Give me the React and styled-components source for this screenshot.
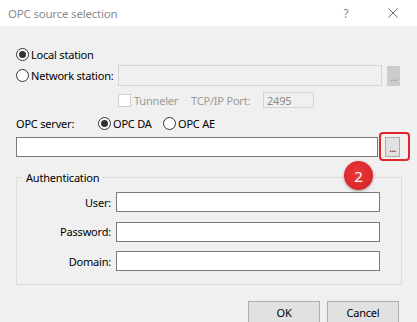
import React from 'react'
import styled, { createGlobalStyle } from 'styled-components'

const Global = createGlobalStyle`
  body {
    margin: 0;
    background: #f0f0f0;
    font-family: "Noto Sans", "Open Sans", sans-serif;
    font-size: 11px;
    letter-spacing: -0.2px;
    color: #000;
    white-space: nowrap;
  }
`

const Window = styled.div`
  position: relative;
  width: 417px;
  height: 322px;
  overflow: hidden;
  background: #f0f0f0;
  display: flex;
  flex-direction: column;
`

const TitleBar = styled.div`
  height: 26px;
  flex-shrink: 0;
  background: #fff;
  display: flex;
  align-items: center;
  padding-left: 8px;
  color: #8c8c8c;
  font-size: 11.5px;
`

const Title = styled.span`
  flex: 1;
`

const Help = styled.span`
  width: 12px;
  text-align: center;
  font-size: 12px;
  color: #8c8c8c;
  margin-right: 36px;
`

const Close = styled.svg`
  width: 10px;
  height: 10px;
  margin-right: 19px;
`

const Body = styled.div`
  display: flex;
  flex-direction: column;
  padding: 18px 15px 0 16px;
`

const Row = styled.div`
  display: flex;
  align-items: center;
  height: ${p => p.h || 20}px;
  margin-top: ${p => p.mt || 0}px;
  padding-left: ${p => p.pl || 0}px;
`

const RadioWrap = styled.label`
  display: flex;
  align-items: center;
  gap: 2px;
  width: ${p => (p.w ? p.w + 'px' : 'auto')};
  margin-left: ${p => p.ml || 0}px;
  flex-shrink: 0;
`

const Circle = styled.span`
  width: 13px;
  height: 13px;
  box-sizing: border-box;
  border: 1px solid #333;
  border-radius: 50%;
  background: #fff;
  display: flex;
  align-items: center;
  justify-content: center;
  flex-shrink: 0;
  &::after {
    content: '';
    width: 7px;
    height: 7px;
    border-radius: 50%;
    background: ${p => (p.checked ? '#333' : 'transparent')};
  }
`

const Radio = ({ checked, children, w, ml }) => (
  <RadioWrap w={w} ml={ml}>
    <Circle checked={checked} />
    <span>{children}</span>
  </RadioWrap>
)

const Field = styled.div`
  box-sizing: border-box;
  width: ${p => p.w}px;
  height: ${p => p.h || 20}px;
  border: 1px solid ${p => (p.disabled ? '#d4d4d4' : '#7a7a7a')};
  background: ${p => (p.disabled ? '#f0f0f0' : '#fff')};
  color: #8a8a8a;
  padding-left: 3px;
  display: flex;
  align-items: center;
  margin-left: ${p => p.ml || 0}px;
  flex-shrink: 0;
`

const DotsButton = styled.div`
  position: relative;
  box-sizing: border-box;
  width: ${p => p.w || 14}px;
  height: ${p => p.h || 20}px;
  margin-left: ${p => p.ml || 0}px;
  background: ${p => (p.disabled ? '#cccccc' : '#e1e1e1')};
  border: 1px solid ${p => (p.disabled ? '#cccccc' : '#adadad')};
  color: ${p => (p.disabled ? '#8f8f8f' : '#222')};
  display: flex;
  align-items: flex-end;
  justify-content: center;
  padding-bottom: 3px;
  font-size: 10px;
  line-height: 1;
  letter-spacing: -0.5px;
  flex-shrink: 0;
`

const Highlight = styled.div`
  position: absolute;
  left: -7px;
  top: -6px;
  right: -11px;
  bottom: -5px;
  border: 2px solid #e0262b;
  border-radius: 4px;
`

const Badge = styled.div`
  position: absolute;
  left: 344px;
  top: 161px;
  width: 29px;
  height: 29px;
  border-radius: 50%;
  background: radial-gradient(circle at 45% 40%, #ec3a3a 0%, #d8262a 70%, #c41f22 100%);
  box-shadow: 0 1px 3px rgba(0, 0, 0, 0.35);
  color: #fff;
  font-size: 15px;
  display: flex;
  align-items: center;
  justify-content: center;
`

const Check = styled.span`
  width: 13px;
  height: 13px;
  box-sizing: border-box;
  border: 1px solid #cfcfcf;
  background: #fff;
  flex-shrink: 0;
`

const Muted = styled.span`
  color: #9a9a9a;
  margin-left: ${p => p.ml || 0}px;
  width: ${p => (p.w ? p.w + 'px' : 'auto')};
  flex-shrink: 0;
`

const Label = styled.span`
  width: ${p => p.w}px;
  flex-shrink: 0;
  text-align: ${p => p.align || 'left'};
`

const Group = styled.fieldset`
  margin: 13px 0 0 0;
  width: 386px;
  box-sizing: border-box;
  border: 1px solid #dcdcdc;
  padding: 7px 0 13px 0;
  display: flex;
  flex-direction: column;
  gap: 9.5px;
`

const Legend = styled.legend`
  padding: 0 3px;
  margin-left: 6px;
`

const FormRow = styled.div`
  display: flex;
  align-items: center;
`

const Buttons = styled.div`
  display: flex;
  justify-content: flex-end;
  gap: 7px;
  margin-top: 16px;
  padding-right: 3px;
`

const Button = styled.div`
  width: 72px;
  height: 22px;
  box-sizing: border-box;
  background: #e1e1e1;
  border: 1px solid #adadad;
  display: flex;
  align-items: center;
  justify-content: center;
`

export default function App() {
  return (
    <Window>
      <Global />
      <TitleBar>
        <Title>OPC source selection</Title>
        <Help>?</Help>
        <Close viewBox="0 0 10 10">
          <path d="M0.5 0.5 L9.5 9.5 M9.5 0.5 L0.5 9.5" stroke="#6e6e6e" strokeWidth="1" fill="none" />
        </Close>
      </TitleBar>
      <Body>
        <Row>
          <Radio checked>Local station</Radio>
        </Row>
        <Row h={21} mt={1}>
          <Radio w={102}>Network station:</Radio>
          <Field disabled w={264} h={21} />
          <DotsButton disabled w={13} ml={5}>...</DotsButton>
        </Row>
        <Row h={16} mt={6} pl={102}>
          <Check />
          <Muted ml={3} w={57}>Tunneler</Muted>
          <Muted w={72}>TCP/IP Port:</Muted>
          <Field disabled w={51} h={16}>2495</Field>
        </Row>
        <Row mt={5}>
          <Label w={82}>OPC server:</Label>
          <Radio checked w={65}>OPC DA</Radio>
          <Radio>OPC AE</Radio>
        </Row>
        <Row mt={4}>
          <Field w={362} />
          <DotsButton ml={7} w={15}>
            ...
            <Highlight />
          </DotsButton>
        </Row>
        <Group>
          <Legend>Authentication</Legend>
          <FormRow>
            <Label w={94} align="right">User:</Label>
            <Field w={264} ml={5} />
          </FormRow>
          <FormRow>
            <Label w={94} align="right">Password:</Label>
            <Field w={264} ml={5} />
          </FormRow>
          <FormRow>
            <Label w={94} align="right">Domain:</Label>
            <Field w={264} ml={5} />
          </FormRow>
        </Group>
        <Buttons>
          <Button>OK</Button>
          <Button>Cancel</Button>
        </Buttons>
      </Body>
      <Badge>2</Badge>
    </Window>
  )
}
